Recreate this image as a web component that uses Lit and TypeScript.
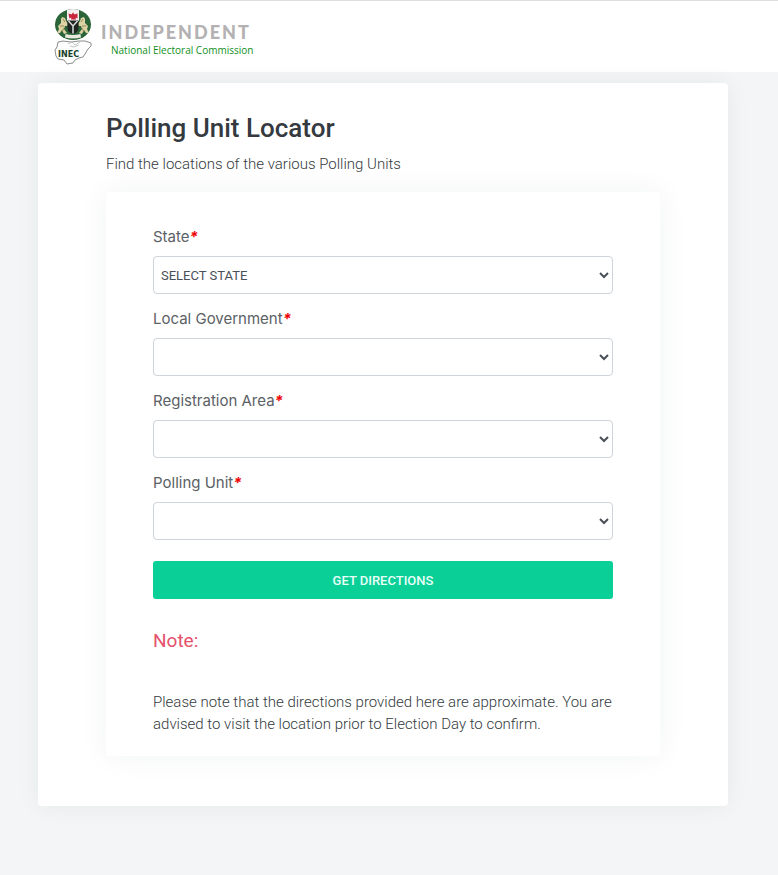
import { LitElement, html, css, svg } from "lit";
import { customElement } from "lit/decorators.js";

interface Field {
  id: string;
  label: string;
  options: string[];
}

const FIELDS: Field[] = [
  { id: "state", label: "State", options: ["SELECT STATE"] },
  { id: "lga", label: "Local Government", options: [] },
  { id: "area", label: "Registration Area", options: [] },
  { id: "unit", label: "Polling Unit", options: [] },
];

const horse = svg`
  <path d="M7 11 l1 -2 l3 1 l1 3 l2 3 l-1 2 l-2 0 l-1 3 l3 4 l-3 1 l-2 -4 l-2 3 l-3 0 l2 -4 l-1 -3 l3 -3 z" fill="#ddd3a4"/>
  <path d="M9 11 l2 3 M6 18 l4 0 M10 20 l-2 4" stroke="#8c7a48" stroke-width=".8" fill="none"/>`;

@customElement("inec-emblem")
export class InecEmblem extends LitElement {
  static styles = css`
    :host {
      display: block;
      flex: none;
    }
    .emblem {
      display: block;
    }
    .name {
      font: 700 8px "DejaVu Sans", Verdana, sans-serif;
      fill: #16402a;
    }
  `;

  render() {
    return html`
      <svg class="emblem" width="38" height="57" viewBox="0 0 38 57" aria-hidden="true">
        <path
          d="M4 34 L9 33 L17 34 L25 33 L31 33 L37 35 L37 38 L34 41 L31 46 L29 49 L25 50 L21 52 L19 55 L13 56 L10 52 L4 51 L2 48 L1 42 L3 39 Z"
          fill="#fdfdfd" stroke="#8a8e8c" stroke-width="1" stroke-linejoin="round"/>
        <path d="M14 36 l4 -2 l3 3 l5 -3 M16 38 l4 1 l5 -2" fill="none" stroke="#b4b8b6" stroke-width=".8"/>
        <ellipse cx="19" cy="16.500" rx="18" ry="15.500" fill="#2a6438"/>
        <path d="M13 2 Q19 0 25 2 L25 13 H13 Z" fill="#f6eeee"/>
        ${horse}
        <g transform="translate(38 0) scale(-1 1)">${horse}</g>
        <path d="M14.500 5.500 l3 1 l1.500 -2 l1.500 2 l3 -1 l0 5 l-2 -1 l.5 2 h-5 l.5 -2 l-2 1 z" fill="#c8233a"/>
        <path d="M13.500 12.500 h11 v7 q0 5 -5.500 6.500 q-5.500 -1.500 -5.500 -6.500 z" fill="#202522"/>
        <path d="M14.500 13 L19 18 L23.500 13 M19 18 V25.500" fill="none" stroke="#d8dcda" stroke-width="1.500"/>
        <path d="M11.500 26 q7.500 2 15 0 l.5 3.500 q-8 2 -16 0 z" fill="#e9e9de"/>
        <text class="name" x="4" y="49">INEC</text>
      </svg>
    `;
  }
}

@customElement("app-root")
export class AppRoot extends LitElement {
  static styles = css`
    :host {
      display: flow-root;
      box-sizing: border-box;
      min-height: 100vh;
      background: #f3f5f7;
      color: #343a40;
      font-family: Roboto, "Liberation Sans", sans-serif;
      font-size: 15px;
      line-height: 22px;
    }
    .header {
      box-sizing: border-box;
      height: 72px;
      padding: 7px 54px;
      border-top: 1px solid #dcdfdf;
      background: #fff;
    }
    .brand {
      display: inline-flex;
      gap: 9px;
      color: inherit;
      text-decoration: none;
    }
    .wordmark {
      display: flex;
      flex-direction: column;
      padding-top: 13px;
    }
    .primary {
      font-family: Lato, sans-serif;
      font-size: 18px;
      line-height: 22px;
      font-weight: 900;
      letter-spacing: 2px;
      color: #b3b1b2;
    }
    .secondary {
      padding-left: 10px;
      font-family: "Open Sans", "Noto Sans", sans-serif;
      font-size: 10px;
      line-height: 15px;
      color: #0f8f1c;
    }
    .card {
      margin: 11px 50px 69px 38px;
      padding: 30px 68px 50px;
      border-radius: 4px;
      background: #fff;
      box-shadow: 0 0 24px rgba(40, 50, 40, 0.06);
    }
    .title {
      margin: 0 0 10px;
      font-size: 26px;
      line-height: 30px;
      font-weight: 500;
    }
    .intro {
      margin: 0 0 17px;
      font-weight: 300;
    }
    .panel {
      padding: 34px 47px 21px;
      border-radius: 4px;
      background: #fff;
      box-shadow: 0 0 30px rgba(40, 50, 50, 0.06);
    }
    .form {
      display: flex;
      flex-direction: column;
    }
    .field {
      display: flex;
      flex-direction: column;
      gap: 8px;
      margin-bottom: 14px;
    }
    .label {
      font-family: Inter, "Noto Sans", sans-serif;
      font-size: 15px;
      color: #5b6165;
    }
    .required {
      color: #f00000;
      font-weight: 700;
      font-style: italic;
    }
    .select {
      box-sizing: border-box;
      width: 100%;
      height: 38px;
      padding: 0 3px;
      border: 1px solid #ced4da;
      border-radius: 4px;
      background: #fff;
      color: #495057;
      font: 400 13px Roboto, sans-serif;
    }
    .submit {
      height: 38px;
      margin-top: 7px;
      border: 0;
      border-radius: 3px;
      background: #0acf97;
      color: #e8fff8;
      font: 500 13px Roboto, sans-serif;
    }
    .note {
      margin: 30px 0 38px;
      font-size: 19px;
      line-height: 24px;
      font-weight: 400;
      color: #e5506c;
    }
    .advice {
      margin: 0;
      font-weight: 300;
    }
  `;

  private renderField(field: Field) {
    return html`
      <div class="field">
        <label class="label" for=${field.id}>${field.label}<span class="required">*</span></label>
        <select class="select" id=${field.id} required>
          ${field.options.map((option) => html`<option>${option}</option>`)}
        </select>
      </div>
    `;
  }

  render() {
    return html`
      <header class="header">
        <a class="brand" href="#">
          <inec-emblem></inec-emblem>
          <span class="wordmark">
            <span class="primary">INDEPENDENT</span>
            <span class="secondary">National Electoral Commission</span>
          </span>
        </a>
      </header>
      <main class="card">
        <h1 class="title">Polling Unit Locator</h1>
        <p class="intro">Find the locations of the various Polling Units</p>
        <section class="panel">
          <form class="form">
            ${FIELDS.map((field) => this.renderField(field))}
            <button class="submit" type="button">GET DIRECTIONS</button>
          </form>
          <h2 class="note">Note:</h2>
          <p class="advice">
            Please note that the directions provided here are approximate. You are
            advised to visit the location prior to Election Day to confirm.
          </p>
        </section>
      </main>
    `;
  }
}
